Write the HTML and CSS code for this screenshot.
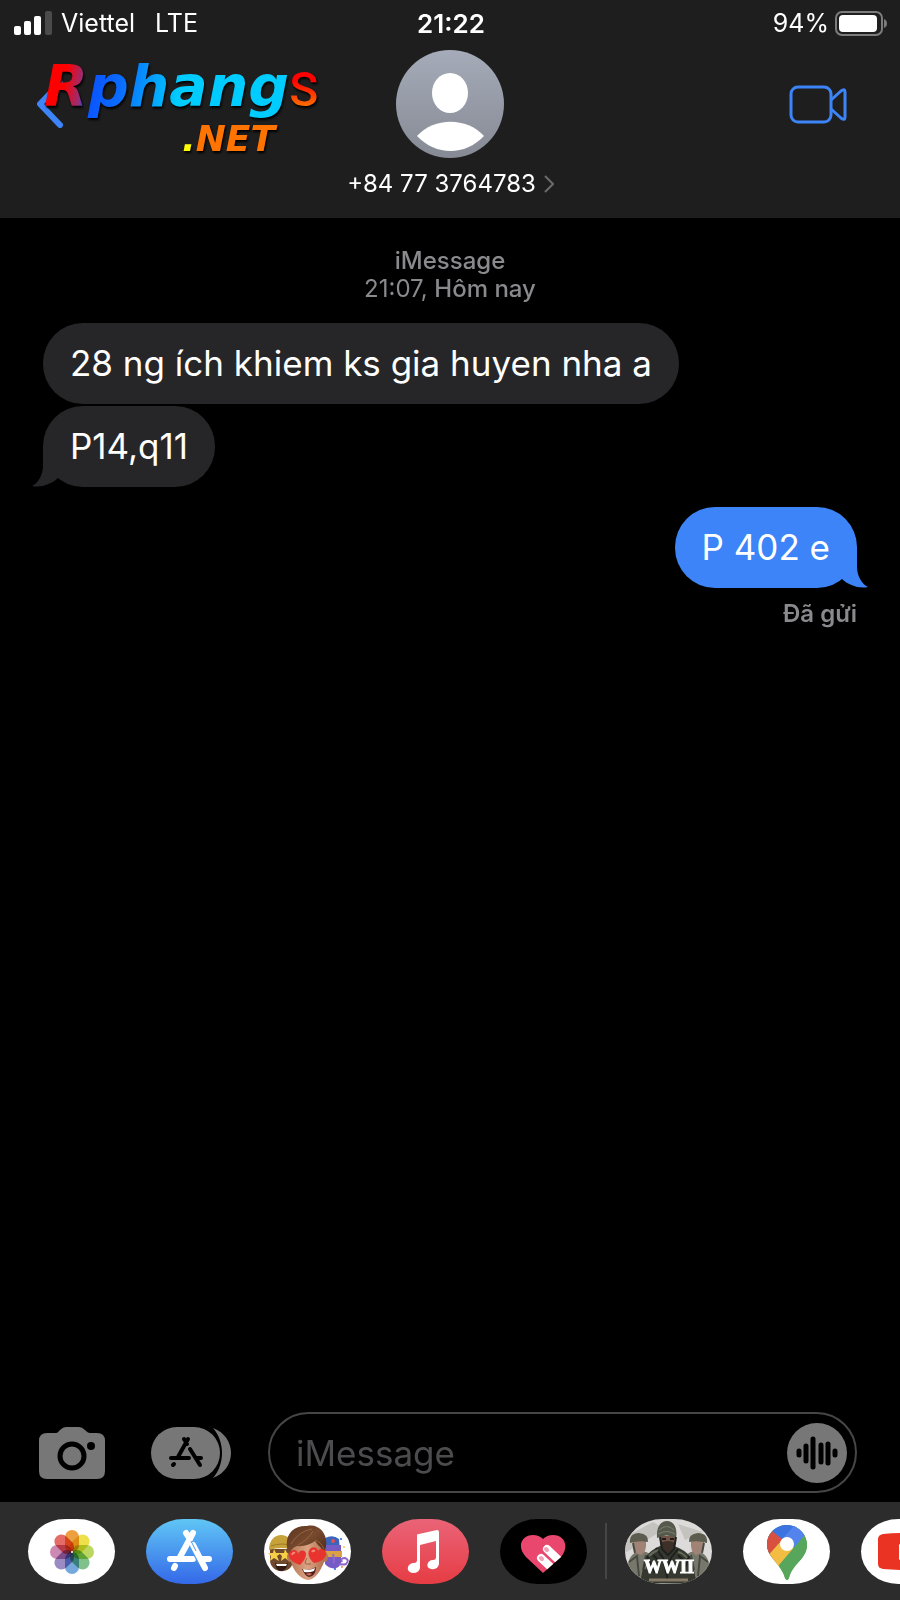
FILE: index.html
```
<!DOCTYPE html>
<html lang="vi">
<head>
    <meta charset="UTF-8">
    <meta name="viewport" content="width=device-width, initial-scale=1.0">
    <title>iMessage</title>
    <link rel="stylesheet" href="styles.css">
</head>
<body>
    <header class="header">
      <div class="status">
        <div class="status-left">
          <svg class="signal" width="38" height="24" viewBox="0 0 38 24">
            <rect x="0" y="15" width="7" height="9" rx="2" fill="#fff"/>
            <rect x="10" y="10" width="7" height="14" rx="2" fill="#fff"/>
            <rect x="20" y="5" width="7" height="19" rx="2" fill="#fff"/>
            <rect x="31" y="0" width="7" height="24" rx="2" fill="#4b4b4b"/>
          </svg>
          <span class="carrier">Viettel</span>
          <span>LTE</span>
        </div>
        <div class="status-time">21:22</div>
        <div class="status-right">
          <span>94%</span>
          <svg width="53" height="25" viewBox="0 0 53 25">
            <rect x="1" y="1" width="46" height="23" rx="6" fill="none" stroke="#7c7c7c" stroke-width="2"/>
            <rect x="4" y="4" width="38" height="17" rx="4" fill="#fff"/>
            <path d="M49 8c4 1 4 8 0 9z" fill="#7c7c7c"/>
          </svg>
        </div>
      </div>

      <div class="contact-bar">
        <button class="back" type="button" aria-label="Quay lại">
          <svg width="27" height="48" viewBox="0 0 27 48">
            <path d="M23 3L3 24l20 21" fill="none" stroke="#3c84f7" stroke-width="6" stroke-linecap="round" stroke-linejoin="round"/>
          </svg>
        </button>
        <a class="contact" href="#">
          <svg width="109" height="109" viewBox="0 0 109 109">
            <defs>
              <linearGradient id="avatar" x1="0" y1="0" x2="0" y2="1">
                <stop offset="0" stop-color="#a6abb9"/>
                <stop offset="1" stop-color="#858a94"/>
              </linearGradient>
            </defs>
            <circle cx="54" cy="54" r="54" fill="url(#avatar)"/>
            <ellipse cx="54" cy="43" rx="18" ry="20" fill="#fff"/>
            <path d="M21 86C38 67 71 67 88 86C69 106 40 106 21 86z" fill="#fff"/>
          </svg>
          <span class="contact-name">+84 77 3764783
            <svg width="10" height="18" viewBox="0 0 10 18">
              <path d="M1 1l8 8-8 8" fill="none" stroke="#6b6b6e" stroke-width="2"/>
            </svg>
          </span>
        </a>
        <button class="video" type="button" aria-label="FaceTime">
          <svg width="58" height="39" viewBox="0 0 58 39">
            <g fill="none" stroke="#3c84f7" stroke-width="3" stroke-linejoin="round">
              <rect x="2" y="2" width="40" height="35" rx="7"/>
              <path d="M42 15L52 6q4-3 4 1v25q0 4-4 1l-10-9"/>
            </g>
          </svg>
        </button>
      </div>

      <div class="logo">
        <div class="logo-top"><span class="logo-word">Rphang</span><span class="logo-s">S</span></div>
        <div class="logo-net"><span class="logo-dot">.</span>NET</div>
      </div>
    </header>

    <main class="chat">
      <div class="stamp">
        <div class="stamp-bold">iMessage</div>
        <div>21:07, <span class="stamp-bold">Hôm nay</span></div>
      </div>
      <div class="bubble">28 ng ích khiem ks gia huyen nha a</div>
      <div class="bubble">P14,q11
        <svg class="tail" width="36" height="41" viewBox="0 0 36 41">
          <path d="M11 0V20C11 29 6 37 0 40C9 42 20 38 26 32L36 25V0z" fill="#262628"/>
        </svg>
      </div>
      <div class="bubble bubble-sent">P 402 e
        <svg class="tail" width="36" height="41" viewBox="0 0 36 41">
          <path d="M25 0V20C25 29 30 37 36 40C27 42 16 38 10 32L0 25V0z" fill="#3c84f7"/>
        </svg>
      </div>
      <div class="delivered">Đã gửi</div>
    </main>

    <form class="compose">
      <button type="button" aria-label="Máy ảnh">
        <svg width="66" height="52" viewBox="0 0 66 52">
          <path d="M8 6h9q2 0 3-2l1-1q3-3 6-3h13q3 0 6 3l1 1q2 2 4 2h7q8 0 8 8v30q0 8-8 8H8q-8 0-8-8V14q0-8 8-8z" fill="#777"/>
          <circle cx="33" cy="29" r="12" fill="none" stroke="#000" stroke-width="5"/>
          <circle cx="52" cy="19" r="4" fill="#000"/>
        </svg>
      </button>
      <button class="compose-apps" type="button" aria-label="Ứng dụng">
        <svg width="80" height="52" viewBox="0 0 80 52">
          <path d="M62 1c24 9 24 41 0 50c12-14 12-36 0-50z" fill="#777"/>
          <rect width="69" height="52" rx="26" fill="#777"/>
          <g fill="none" stroke="#000" stroke-width="4" stroke-linecap="round">
            <path d="M37 12L27 30M33 12l3 5M20 31h18M39 22l10 16M46 31h4M23 37l-1 1"/>
          </g>
        </svg>
      </button>
      <div class="field">
        <input type="text" placeholder="iMessage" aria-label="iMessage">
        <button type="button" aria-label="Ghi âm">
          <svg width="60" height="60" viewBox="0 0 60 60">
            <circle cx="30" cy="30" r="30" fill="#777"/>
            <path d="M12 28v4M19 23v15M26 16v28M34 22v17M41 21v19M48 28v4" stroke="#000" stroke-width="5" stroke-linecap="round"/>
          </svg>
        </button>
      </div>
    </form>

    <nav class="apps" aria-label="Ứng dụng iMessage">
      <div class="apps-group">
        <button class="app" type="button" aria-label="Ảnh">
          <svg viewBox="0 0 87 65">
            <g class="petals">
              <rect x="37" y="11" width="14" height="22" rx="7" fill="#eda03f"/>
              <rect x="37" y="11" width="14" height="22" rx="7" fill="#ede04a" transform="rotate(45 44 33)"/>
              <rect x="37" y="11" width="14" height="22" rx="7" fill="#bcd75f" transform="rotate(90 44 33)"/>
              <rect x="37" y="11" width="14" height="22" rx="7" fill="#80c18b" transform="rotate(135 44 33)"/>
              <rect x="37" y="11" width="14" height="22" rx="7" fill="#75a9dc" transform="rotate(180 44 33)"/>
              <rect x="37" y="11" width="14" height="22" rx="7" fill="#9c8bc3" transform="rotate(225 44 33)"/>
              <rect x="37" y="11" width="14" height="22" rx="7" fill="#cc89b3" transform="rotate(270 44 33)"/>
              <rect x="37" y="11" width="14" height="22" rx="7" fill="#e46b66" transform="rotate(315 44 33)"/>
            </g>
            <circle cx="44" cy="33" r="1" fill="#fff"/>
          </svg>
        </button>
        <button class="app app-store" type="button" aria-label="App Store">
          <svg viewBox="0 0 87 65">
            <g fill="none" stroke="#fff" stroke-width="6" stroke-linecap="round">
              <path d="M47 14L34 38M40 14l4 6M24 40h23"/>
              <path d="M47 26l12 23M57 40h6M29 47l-1 2"/>
            </g>
            <path d="M45 22l5 10M48 36l4 8" stroke="#4a9cf0" stroke-width="1"/>
          </svg>
        </button>
        <button class="app" type="button" aria-label="Memoji">
          <svg viewBox="0 0 87 65">
            <defs>
              <linearGradient id="hair" x1="0" y1="0" x2="1" y2="1">
                <stop offset="0" stop-color="#5b3420"/>
                <stop offset="0.5" stop-color="#774a2e"/>
                <stop offset="1" stop-color="#472616"/>
              </linearGradient>
              <linearGradient id="skin" x1="0" y1="0" x2="1" y2="0">
                <stop offset="0" stop-color="#b77b58"/>
                <stop offset="0.5" stop-color="#dba383"/>
                <stop offset="1" stop-color="#b0714f"/>
              </linearGradient>
            </defs>
            <path d="M6 30h23v12c-1 14-22 13-23 0z" fill="#6f492e"/>
            <path d="M5 31c0-20 24-20 25 0q-12-4-25 0z" fill="#c7a13a"/>
            <path d="M7 27q11-4 22 0" fill="none" stroke="#9d7b26"/>
            <path d="M11 44q6 3 13 0q-2 8-7 8t-6-8z" fill="#301c15"/>
            <path d="M12 45h11l-1 2h-9z" fill="#fff"/>
            <path d="M10 30l2 4h5l-4 3 2 5-5-3-4 3 1-5-3-3h5zM21 30l2 4h4l-3 3 1 5-4-3-4 3 1-5-3-3h5z" fill="#f7ce46"/>
            <path d="M61 19q8-4 14 1l1 12H61z" fill="#3966b8"/>
            <circle cx="69" cy="22" r="2" fill="#e54d59"/>
            <path d="M60 26h17v18c-3 8-12 6-16 1z" fill="#765bc5"/>
            <path d="M59 32h19v6H59z" fill="#dca047"/>
            <path d="M69 35q2 8 0 9M75 45q5 1 7 0q4-4-1-6q-5 0-3 4" fill="none" stroke="#8e68cc" stroke-width="2"/>
            <circle cx="77" cy="20" r="1" fill="#2b5de4"/>
            <circle cx="80" cy="28" r="1" fill="#f4ca42"/>
            <circle cx="71" cy="50" r="1" fill="#2b5de4"/>
            <circle cx="78" cy="48" r="1" fill="#ed9148"/>
            <ellipse cx="26" cy="38" rx="3" ry="5" fill="#b57855"/>
            <ellipse cx="61" cy="38" rx="3" ry="5" fill="#b57855"/>
            <path d="M27 22h33v21c-3 9-10 18-16 18S29 52 27 43z" fill="url(#skin)"/>
            <path d="M25 36C18 18 28 6 43 7c12-3 21 8 19 20l-2 9c-1-5-3-8-6-10l-3-4q-8 6-18 5q-6 2-8 9z" fill="url(#hair)"/>
            <path d="M27 25q8-13 21-15M34 26q10-5 15-14M51 21q6 2 9 9" fill="none" stroke="#98623f"/>
            <path d="M36 46C27 43 22 37 26 33c4-4 8-1 8 2c2-5 8-4 8 0c0 4-3 8-6 11zM50 44c-5-4-8-11-3-15c4-2 7 1 7 3c3-4 9-1 8 3c0 4-5 8-12 9z" fill="#e8332e"/>
            <path d="M28 36q1-3 3-2M48 33q1-2 3-1" fill="none" stroke="#f78b78" stroke-width="2"/>
            <path d="M43 39q-3 5-1 6h5" fill="none" stroke="#a15f43"/>
            <path d="M38 50q8 2 14-2q0 9-7 10q-4-1-7-8z" fill="#532019"/>
            <path d="M39 50q7 2 12-1l-1 3q-5 2-10 1z" fill="#fff"/>
            <path d="M42 55q4-2 6 0q-3 3-6 0z" fill="#c96459"/>
          </svg>
        </button>
        <button class="app app-music" type="button" aria-label="Music">
          <svg viewBox="0 0 87 65">
            <path d="M35 16q0-1 2-1l18-4q2 0 2 2v32q-1 6-8 5c-6-1-4-9 2-9q3 0 3-3V22l-16 4v23q-1 5-7 5c-8-1-6-10 1-10q3 0 3-3z" fill="#fff"/>
          </svg>
        </button>
        <button class="app app-touch" type="button" aria-label="Digital Touch">
          <svg viewBox="0 0 87 65">
            <defs>
              <clipPath id="heart"><path d="M43 54L26 38C16 27 22 16 33 16q6 0 10 4q4-4 10-4c11 0 17 11 8 22z"/></clipPath>
            </defs>
            <g clip-path="url(#heart)">
              <rect width="87" height="65" fill="#e9476d"/>
              <g stroke="#fff" stroke-width="8" stroke-linecap="round">
                <path d="M47 30L66 48"/>
                <path d="M41 39L58 55"/>
              </g>
              <g stroke="#f3a2b5" stroke-width="4" stroke-linecap="round">
                <path d="M46 30l1 1M41 39l1 1"/>
              </g>
            </g>
          </svg>
        </button>
      </div>
      <div class="apps-divider"></div>
      <div class="apps-group">
        <button class="app app-wwii" type="button" aria-label="WWII">
          <svg viewBox="0 0 87 65">
            <path d="M0 18L28 3l12 7L0 34zM53 5l25 8L60 21zM1 51l17-12 4 4L8 62z" fill="#c5c3c0"/>
            <g id="soldier">
              <path d="M2 51q1-15 10-18l6-1q9 2 9 9l-3 24H8z" fill="#77776b"/>
              <path d="M8 22h13q1 11-5 14q-7-2-8-8z" fill="#a08375"/>
              <path d="M5 24q-1-10 9-10q10 1 9 9q-9-2-18 1z" fill="#5c5d4f"/>
              <path d="M8 24l2 10M4 43l8-6 2 20M21 36l-3 15" fill="none" stroke="#464a41" stroke-width="2"/>
            </g>
            <use href="#soldier" transform="translate(87 0) scale(-1 1)"/>
            <path d="M15 64l5-25q5-8 15-12h14q12 4 17 12l6 26z" fill="#34382f"/>
            <path d="M35 17h16l-1 12q-7 7-14 0z" fill="#715447"/>
            <path d="M35 24q8-4 15 0l-2 7q-5 5-10 1z" fill="#3c3029"/>
            <path d="M37 20h4M45 20h4" stroke="#211d19" stroke-width="2"/>
            <path d="M32 19C31 5 38 2 42 2c6 0 11 6 9 17q-9-5-19 0z" fill="#555a4d"/>
            <path d="M34 11q8-7 15 0M33 15q9-5 17 0" fill="none" stroke="#7c7f6c"/>
            <path d="M35 18l2 12 6 6 6-6 2-12M31 29l7 10 5 23M53 30l-7 9-3 8M22 37l8 17M64 37l-6 18M28 36l5 5M53 36l5 5" fill="none" stroke="#1d211d" stroke-width="2"/>
            <path d="M24 37q4-4 9-6M53 33q5 1 9 6M20 50l4-10M64 43l3 9" fill="none" stroke="#646759" stroke-width="2"/>
            <path d="M24 61h39" stroke="#857968" stroke-width="3"/>
            <text x="44" y="54" text-anchor="middle">WWII</text>
          </svg>
        </button>
        <button class="app" type="button" aria-label="Google Maps">
          <svg viewBox="0 0 87 65">
            <defs>
              <clipPath id="pin"><path d="M24 26C24 14 33 6 44 6s20 9 20 20c0 14-15 19-18 33q-2 4-4 0C39 46 24 38 24 26z"/></clipPath>
            </defs>
            <g clip-path="url(#pin)">
              <rect width="87" height="65" fill="#58a55c"/>
              <path d="M20 48L62 0H20z" fill="#3b74df"/>
              <path d="M35 25L55 2l10 11-18 22z" fill="#5383ec"/>
              <path d="M20 5l23 18-18 23z" fill="#d85040"/>
              <path d="M22 40l16-18 14 8-20 24z" fill="#f2bd42"/>
              <path d="M36 46L66 11v55H36z" fill="#58a55c"/>
            </g>
            <circle cx="44" cy="25" r="7" fill="#fff"/>
          </svg>
        </button>
        <button class="app" type="button" aria-label="YouTube">
          <svg viewBox="0 0 87 65">
            <path d="M17 20q0-4 5-5q22-2 44 0q5 1 5 5v25q0 4-5 5q-22 2-44 0q-5-1-5-5z" fill="#ea3323"/>
            <path d="M38 25v16l14-8z" fill="#fff"/>
          </svg>
        </button>
      </div>
    </nav>
</body>
</html>
```
FILE: styles.css
```
* {
  box-sizing: border-box;
}

body {
  display: flex;
  flex-direction: column;
  min-height: 100vh;
  margin: 0;
  overflow-x: hidden;
  font-family: Inter, "Liberation Sans", sans-serif;
  color: #fff;
  background: #000;
}

button {
  padding: 0;
  border: 0;
  background: none;
  cursor: pointer;
}

svg {
  display: block;
}

/* status bar and contact */
.header {
  position: relative;
  padding-bottom: 18px;
  background: #1e1e1e;
}

.status {
  display: grid;
  grid-template-columns: 1fr auto 1fr;
  align-items: center;
  height: 46px;
  padding: 0 12px 0 14px;
  font-size: 25px;
}
.status-left,
.status-right {
  display: flex;
  align-items: center;
}
.status-right {
  justify-content: flex-end;
  gap: 6px;
}
.carrier {
  margin: 0 20px 0 9px;
}
.status-time {
  font-size: 26px;
  font-weight: 600;
}

.contact-bar {
  display: grid;
  grid-template-columns: 1fr auto 1fr;
  padding: 4px 53px 0 37px;
}
.back {
  justify-self: start;
  align-self: start;
  margin-top: 30px;
}
.video {
  justify-self: end;
  align-self: start;
  margin-top: 35px;
}
.contact {
  display: flex;
  flex-direction: column;
  align-items: center;
  gap: 9px;
  margin-left: 17px;
  color: #fff;
  text-decoration: none;
}
.contact-name {
  display: flex;
  align-items: center;
  gap: 8px;
  font-size: 24px;
  line-height: 32px;
}

.logo {
  position: absolute;
  top: 54px;
  left: 44px;
  font-family: "DejaVu Sans", sans-serif;
  font-weight: 700;
  font-style: italic;
  filter: drop-shadow(1px 2px 1px #000);
  pointer-events: none;
}
.logo-top {
  display: flex;
  align-items: baseline;
  font-size: 57px;
  line-height: 64px;
}
.logo-word,
.logo-s {
  color: transparent;
  background-clip: text;
  -webkit-background-clip: text;
}
.logo-word {
  background-image: linear-gradient(100deg, #f00 10%, #93307a 17%, #0a50ff 19%, #0a6cff 32%, #0cf 55%);
}
.logo-s {
  font-family: Roboto, sans-serif;
  font-size: 48px;
  font-weight: 500;
  font-style: normal;
  background-image: linear-gradient(#f00 35%, #ff7a00 80%);
}
.logo-net {
  margin-left: 138px;
  font-size: 36px;
  line-height: 34px;
  color: #ff7300;
}
.logo-dot {
  color: #ff0;
}

/* conversation */
.chat {
  display: flex;
  flex: 1;
  flex-direction: column;
  align-items: flex-start;
  padding: 29px 43px;
}
.stamp {
  align-self: center;
  margin-bottom: 20px;
  font-size: 24px;
  line-height: 28px;
  text-align: center;
  color: #8a8a8e;
}
.stamp-bold {
  font-weight: 500;
}
.bubble {
  position: relative;
  margin-bottom: 2px;
  padding: 18px 27px;
  border-radius: 40px;
  font-size: 35px;
  line-height: 45px;
  background: #262628;
}
.bubble-sent {
  align-self: flex-end;
  margin-top: 18px;
  background: #3c84f7;
}
.tail {
  position: absolute;
  bottom: 0;
  left: -11px;
}
.bubble-sent .tail {
  right: -11px;
  left: auto;
}
.delivered {
  align-self: flex-end;
  margin-top: 10px;
  font-size: 24px;
  font-weight: 600;
  line-height: 28px;
  color: #8a8a8e;
}

/* message box */
.compose {
  display: flex;
  align-items: center;
  padding: 9px 43px 9px 39px;
}
.compose-apps {
  margin: 0 37px 0 46px;
}
.field {
  display: flex;
  flex: 1;
  align-items: center;
  min-width: 0;
  height: 81px;
  padding: 0 8px 0 26px;
  border: 2px solid #464648;
  border-radius: 41px;
}
.field input {
  flex: 1;
  min-width: 0;
  padding: 0;
  border: 0;
  outline: 0;
  font: inherit;
  font-size: 35px;
  color: #fff;
  background: none;
}
.field input::placeholder {
  color: #4c4c4e;
  opacity: 1;
}

/* app strip */
.apps {
  display: flex;
  align-items: center;
  gap: 18px;
  height: 98px;
  padding: 0 28px;
  overflow: hidden;
  background: #2c2c2c;
}
.apps-group {
  display: flex;
  gap: 31px;
}
.apps-divider {
  flex: none;
  width: 2px;
  height: 56px;
  background: #464648;
}
.app {
  flex: none;
  width: 87px;
  height: 65px;
  border-radius: 38px / 33px;
  overflow: hidden;
  background: #fff;
}
.app-store {
  background: linear-gradient(#60c6f5, #3468e8);
}
.app-music {
  background: linear-gradient(#ea6478, #e63c44);
}
.app-touch {
  background: #000;
}
.app-wwii {
  background: #dddbd9;
}
.app-wwii text {
  font: 700 18px "Liberation Serif", serif;
  fill: #fff;
  stroke: #fff;
  stroke-width: 1px;
}
.petals rect {
  mix-blend-mode: multiply;
}
```
